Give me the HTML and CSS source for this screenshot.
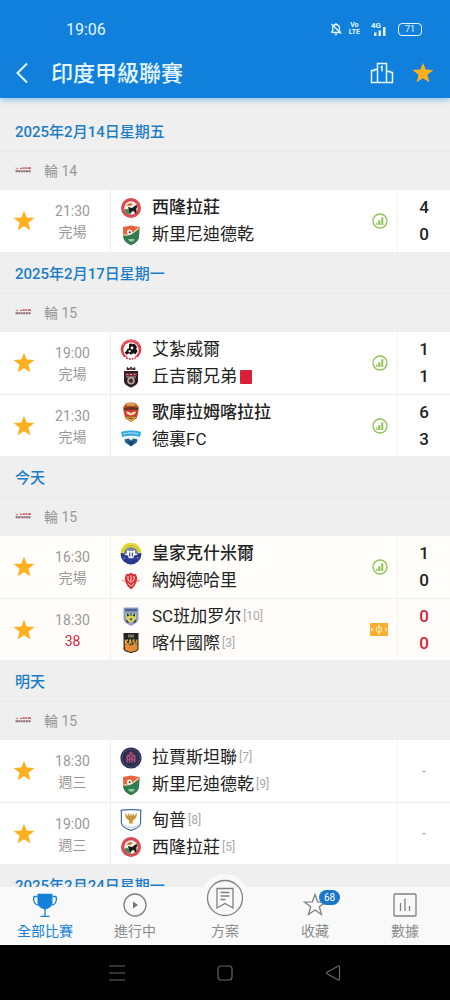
FILE: index.html
```html
<!DOCTYPE html>
<html lang="zh-Hant">
  <head>
    <meta charset="UTF-8" />
    <meta name="viewport" content="width=device-width, initial-scale=1" />
    <title>印度甲級聯賽</title>
    <link rel="stylesheet" href="styles.css" />
  </head>
  <body>
    <!-- shared icons and club badges -->
    <svg class="sprite" aria-hidden="true">
      <symbol id="star" viewBox="0 0 24 24">
        <path fill="#ffb01f" d="M12 .8l2.900 7.500 8.500.4-6.600 5.200 2.200 8.300-7-4.600-7 4.600 2.200-8.300L.6 8.700l8.500-.4z" />
      </symbol>
      <symbol id="stats" viewBox="0 0 16 16">
        <circle cx="8" cy="8" r="7" fill="none" stroke="#8fc352" stroke-width="1.3" />
        <path fill="#8fc352" d="M4.200 9.500h1.300v2.500H4.200zM6.200 7.200h2.200V12H6.200zM9.300 4.200h2V12h-2z" />
      </symbol>
      <symbol id="league" viewBox="0 0 16 8">
        <path fill="#c9666b" d="M0 1.500l2 .5 1.500 1.300L2 3.300zM5 1.800h2v1.200H5zM7.600 1.300h2.200V3H7.600zM10.300 1.300h2V3h-2zM12.900 1.300H16V3h-3.100z" />
        <path fill="#8a6a6c" d="M.6 4.200h2.200v2H.6zM3.200 4.200h2.200v2H3.200zM5.900 4.200h1.800v2H5.900zM8.200 4.200h2.200v2H8.200zM10.900 4.200h2v2h-2zM13.400 4.200h2.200v2h-2.200z" />
      </symbol>
      <symbol id="shillong" viewBox="0 0 22 22">
        <circle cx="11" cy="11" r="10" fill="#d8424f" />
        <circle cx="11" cy="11" r="8.600" fill="none" stroke="#e36c72" stroke-dasharray="1 1" />
        <circle cx="11" cy="11" r="6.800" fill="#f6f3e8" />
        <path fill="#3d8a55" d="M4.500 12.500c3-1.600 5 .4 6.500 4.900C7.500 17.800 5 15.600 4.500 12.500z" />
        <path fill="#1d1d1d" d="M8 10l4 1 4.500-3.300.8 2.300-1 1.500.3 4-1.600 1-1-2.500-2 .4-1.500 2-1.500-2.400z" />
        <path fill="#d9622d" d="M6 8.500l4-2.500 3 1-3 2z" />
      </symbol>
      <symbol id="sreenidi" viewBox="0 0 22 22">
        <path fill="#e8633f" d="M3 3l8-1.500L19.500 3 19 13c-.8 4-4 6.500-7.800 8C7 19.500 4 17 3.300 13z" />
        <path fill="#2f7d50" d="M19.500 3L19 13c-.8 4-4 6.500-7.800 8C7 19.500 4 17 3.300 13l-.1-2c6 .5 10-1.500 16.300-8z" />
        <path fill="none" stroke="#f5d7b0" stroke-width="1.200" d="M3.500 11.200C10 11.300 13 9.500 18.800 4" />
        <circle cx="9.500" cy="8" r="2.600" fill="#f7f3ea" />
        <circle cx="9.700" cy="8.200" r="1" fill="#333" />
        <path fill="#9ccaa3" d="M8 15h6.500l-1 2.500h-4z" />
      </symbol>
      <symbol id="aizawl" viewBox="0 0 22 22">
        <circle cx="11" cy="10.500" r="10.300" fill="#e23a44" />
        <path fill="none" stroke="#f6b4b4" stroke-dasharray="1 1" d="M3 6a9.300 9.300 0 0 1 16 0" />
        <circle cx="11" cy="11" r="7.700" fill="#fff" />
        <path fill="#151515" d="M9 5.500l2-1.200 1.500 1 2-.5 2.500 3-.8 2 1.300 2.500-2 3-2.500-1-2 1.500-2-1.500-2.500 1.500-2-2.500 2-1 .5-2 2-1z" />
        <circle cx="12" cy="9" r="1.400" fill="#fff" />
        <path fill="#fff" d="M8 12l2-1 1 1.500-1.500 1zM4.500 18h13l-2 4h-9z" />
        <path fill="#e23a44" d="M6 18.500h2v1.500H6zM9 19h1.700v1.700H9zM11.700 19h1.700v1.700h-1.700zM14.300 18.500h1.800V20h-1.800z" />
      </symbol>
      <symbol id="churchill" viewBox="0 0 22 22">
        <path fill="#3a2226" d="M7 .8l2 1.700 2-1.900 2 1.900 2-1.700.5 3.200h-9z" />
        <path fill="#2c1d20" d="M4 5h14v10c0 3-3 5-7 6.500C7 20 4 18 4 15z" />
        <path fill="#7b2731" d="M5 7h12v3H5z" />
        <path fill="none" stroke="#c2adad" d="M6 11l10 0M6.500 8.500h2M10 8.500h2M13.500 8.500h2" />
        <circle cx="11" cy="14.800" r="3.800" fill="#b7a8a8" />
        <path fill="#52252c" d="M11 12.300l2.300 1.700-.8 2.800h-3L8.700 14z" />
        <path fill="#9f6b6e" d="M9 2.600h4v1.200H9z" />
      </symbol>
      <symbol id="gokulam" viewBox="0 0 22 22">
        <path fill="#b9502f" d="M6 2.500c3-1.500 7-1.500 10 0l3 4-1 6-1.500 5L11 21l-5.500-3.500L4 12.500l-1-6z" />
        <path fill="#e0a64a" d="M6 3c3-1.500 7-1.500 10 0l-1.500 2c-2-.8-5-.8-7 0z" />
        <path fill="#6a3226" d="M4 7c4-1.500 10-1.500 14 0v2H4z" />
        <path fill="#d8322f" d="M4.500 9.500h13l-1 5.500h-11z" />
        <path fill="#f3dfba" d="M6 10.500l3.500.5 1.500 1.500 1.500-1.500 3.500-.5-1 2.500-4 1.500-4-1.500z" />
        <path fill="#d9b03c" d="M6 16h10l-1.500 2.500L11 20.500l-3.500-2z" />
        <path fill="#6a3226" d="M8.500 16.800h5v1h-5z" />
      </symbol>
      <symbol id="delhi" viewBox="0 0 22 22">
        <path fill="#34a9df" d="M1 4c6-2 14-2 20 0l-1 5c-6-1.800-12-1.800-18 0z" />
        <path fill="none" stroke="#bfe7f7" stroke-width="1.400" stroke-dasharray="1.500 .7" d="M3.500 6c5-1.500 10-1.500 15 0" />
        <path fill="#e6f5fb" d="M4 9.500c5-1.500 9-1.500 14 0V14l-7 5-7-5z" />
        <path fill="#255f8c" d="M4.500 11.500l4-1 2.500 2 2.500-2 4 1-.8 3L11 18.500l-5.700-4z" />
        <path fill="#133d60" d="M8 13.500h6l-3 4z" />
      </symbol>
      <symbol id="kashmir" viewBox="0 0 22 22">
        <circle cx="11" cy="11" r="10.400" fill="#27358e" />
        <path fill="#e8da36" d="M.6 10A10.400 10.400 0 0 1 21.400 10l-3.600.5a6.900 6.900 0 0 0-13.600 0z" />
        <path fill="none" stroke="#8c8a35" stroke-dasharray="1 1.200" d="M3 8.200a8.500 8.500 0 0 1 16 0" />
        <circle cx="11" cy="10.800" r="6.500" fill="#6c8aa6" />
        <path fill="#27358e" d="M5 12h12c-.5 3.500-3 5.300-6 5.300S5.500 15.500 5 12z" />
        <path fill="#f7f7f3" d="M7 7l3 1.300 1-1 1 1L15 7v3.500l3 .8-4 1.500-.7 2.500H8.700L8 12.800l-4-1.500 3-.8z" />
        <path fill="#27358e" d="M9.200 9.500h1v4h-1zM11.800 9.500h1v4h-1z" />
        <path fill="#fff" d="M3.500 14.500l1.500.3-1 1.200zM17 14.800l1.500-.3-.5 1.500z" />
      </symbol>
      <symbol id="namdhari" viewBox="0 0 22 22">
        <path fill="#f2b0a0" d="M1 9.500l5 .7v2l-3-.7zM21 9.500l-5 .7v2l3-.7z" />
        <path fill="#d93338" d="M11 2.500l1.500 1.300 3.500.5 1.300 4-1 4L14.500 16 11 19.500 7.500 16l-1.800-3.700-1-4 1.300-4 3.500-.5z" />
        <path fill="none" stroke="#fbd9d4" d="M8 6v4l3 2.500 3-2.500V6M11 5.500V11M8 13.500l3 2.500 3-2.500" />
      </symbol>
      <symbol id="bengaluru" viewBox="0 0 22 22">
        <path fill="#8fa0c4" d="M3.500 2.500h15V14c0 3-4 5-7.500 7-3.500-2-7.500-4-7.500-7z" />
        <path fill="#4f5f8e" d="M5 3.800h12v2.400H5z" />
        <path fill="#d9cf62" d="M6 8.500l3 1 2-1 2 1 3-1v5l-3 4h-4l-3-4z" />
        <path fill="#28363b" d="M7 8l2.500 2.700-2.500.8zM15 8l-2.500 2.700 2.500.8zM9.500 13.500h3L11 15.700zM6.500 14.500l3 3.500-3.500-1zM15.500 14.500l-3 3.500 3.500-1z" />
        <path fill="#608e79" d="M10 8h2v3h-2z" />
      </symbol>
      <symbol id="kashi" viewBox="0 0 22 22">
        <path fill="#242321" d="M3.500 1h15v16c0 2-4 3-7.500 4.300C7.500 20 3.500 19 3.500 17z" />
        <path fill="#777268" d="M8 2.500h6v3H8z" />
        <path fill="#e58b32" d="M4.500 13l3-1 3.500 1.500 3.500-1.500 3 1v4c0 1.500-4 2.300-6.500 3.200-2.500-.9-6-1.700-6-3.200z" />
        <path fill="none" stroke="#efb33e" stroke-width="1.200" d="M5.300 7.500v5M8 7.500l-2.300 2.500L8 12.500M9 12.500l1.200-5 1.200 5M15 8h-2v2h2v2h-2M16.800 7.500v5" />
      </symbol>
      <symbol id="rajasthan" viewBox="0 0 22 22">
        <circle cx="11" cy="11" r="10.600" fill="#292b50" />
        <circle cx="11" cy="11" r="8.800" fill="none" stroke="#62658a" stroke-width="1.200" stroke-dasharray="1 1" />
        <circle cx="11" cy="11" r="6.800" fill="#353052" />
        <path fill="#a8506f" d="M6.500 9L8 7l1.500 1.500V6L11 4l1.500 2v2.500L14 7l1.500 2v6.500h-9z" />
        <path fill="#292b50" d="M8 10h1v2H8zM10.500 7.500h1V11h-1zM13 10h1v2h-1zM8 13.500h1v2H8zM10.500 12.500h1v3h-1zM13 13.500h1v2h-1z" />
      </symbol>
      <symbol id="dempo" viewBox="0 0 22 22">
        <path fill="#fff" stroke="#476da8" stroke-width="1.200" d="M1 1.500C2 .8 4 .6 11 .6s9 .2 10 .9c-.5 1.500-.4 3-.4 4.500v8c0 4-5 6-9.600 7.300C6.400 20 1.400 18 1.400 14V6c0-1.500.1-3-.4-4.500z" />
        <path fill="#c9983e" d="M5 4l3 3V4l2 3 1-3.500L12 7l2-3v3l3-3c0 4-1.500 6-3.500 7l-1 2 1 1.500h-5l1-1.500-1-2C6.500 10 5 8 5 4z" />
        <path fill="none" stroke="#7794c0" stroke-dasharray="1 .8" d="M3.500 15.500c4 3.700 11 3.700 15 0" />
      </symbol>
    </svg>

    <header class="header">
      <div class="status-bar">
        <span class="clock">19:06</span>
        <div class="status-icons">
          <svg class="icon-mute" viewBox="0 0 12 14" aria-hidden="true">
            <path d="M2.500 10.500h8L9.400 9V6A3.400 3.400 0 0 0 6 2.500 3.400 3.400 0 0 0 2.700 6v3L1 10.500M6 1v1.500M5 12.500h2M1.500 2l9.500 9.500" />
          </svg>
          <span class="volte"><span>Vo</span><span>LTE</span></span>
          <span class="signal">
            <span>4G</span>
            <svg viewBox="0 0 16 14" aria-hidden="true">
              <path fill="#e5f5ff" d="M3 10.500h2.500V14H3zM7.500 8.500H10V14H7.500zM12 5h2.500v9H12z" />
            </svg>
          </span>
          <span class="battery">71</span>
        </div>
      </div>
      <div class="title-bar">
        <button class="icon-button" type="button" aria-label="返回">
          <svg class="icon-back" viewBox="0 0 12 22"><path d="M11 1.500L1.500 11l9.500 9.500" /></svg>
        </button>
        <h1 class="title">印度甲級聯賽</h1>
        <button class="icon-button" type="button" aria-label="積分榜">
          <svg class="icon-podium" viewBox="0 0 24 22">
            <path d="M7.500 20.500V1.500h9v19M7.500 7.500H4.500v1h-3v12h21v-10h-2v-1h-4M10.500 5.500l1.500-1v5" />
          </svg>
        </button>
        <button class="icon-button" type="button" aria-label="收藏聯賽">
          <svg class="icon-star"><use href="#star" /></svg>
        </button>
      </div>
    </header>

    <main class="fixtures">
      <section class="day">
        <h2 class="date">2025年2月14日星期五</h2>
        <h3 class="round"><svg class="league"><use href="#league" /></svg>輪 14</h3>
        <article class="match">
          <button class="fav" type="button" aria-label="收藏"><svg class="icon-star"><use href="#star" /></svg></button>
          <div class="time"><span>21:30</span><span>完場</span></div>
          <div class="teams">
            <div class="team winner"><svg class="logo"><use href="#shillong" /></svg>西隆拉莊</div>
            <div class="team"><svg class="logo"><use href="#sreenidi" /></svg>斯里尼迪德乾</div>
          </div>
          <svg class="icon-stats"><use href="#stats" /></svg>
          <div class="score"><span>4</span><span>0</span></div>
        </article>
      </section>

      <section class="day">
        <h2 class="date">2025年2月17日星期一</h2>
        <h3 class="round"><svg class="league"><use href="#league" /></svg>輪 15</h3>
        <article class="match">
          <button class="fav" type="button" aria-label="收藏"><svg class="icon-star"><use href="#star" /></svg></button>
          <div class="time"><span>19:00</span><span>完場</span></div>
          <div class="teams">
            <div class="team"><svg class="logo"><use href="#aizawl" /></svg>艾紮威爾</div>
            <div class="team"><svg class="logo"><use href="#churchill" /></svg>丘吉爾兄弟<span class="red-card"></span></div>
          </div>
          <svg class="icon-stats"><use href="#stats" /></svg>
          <div class="score"><span>1</span><span>1</span></div>
        </article>
        <article class="match">
          <button class="fav" type="button" aria-label="收藏"><svg class="icon-star"><use href="#star" /></svg></button>
          <div class="time"><span>21:30</span><span>完場</span></div>
          <div class="teams">
            <div class="team winner"><svg class="logo"><use href="#gokulam" /></svg>歌庫拉姆喀拉拉</div>
            <div class="team"><svg class="logo"><use href="#delhi" /></svg>德裏FC</div>
          </div>
          <svg class="icon-stats"><use href="#stats" /></svg>
          <div class="score"><span>6</span><span>3</span></div>
        </article>
      </section>

      <section class="day today">
        <h2 class="date">今天</h2>
        <h3 class="round"><svg class="league"><use href="#league" /></svg>輪 15</h3>
        <article class="match">
          <button class="fav" type="button" aria-label="收藏"><svg class="icon-star"><use href="#star" /></svg></button>
          <div class="time"><span>16:30</span><span>完場</span></div>
          <div class="teams">
            <div class="team winner"><svg class="logo"><use href="#kashmir" /></svg>皇家克什米爾</div>
            <div class="team"><svg class="logo"><use href="#namdhari" /></svg>納姆德哈里</div>
          </div>
          <svg class="icon-stats"><use href="#stats" /></svg>
          <div class="score"><span>1</span><span>0</span></div>
        </article>
        <article class="match live">
          <button class="fav" type="button" aria-label="收藏"><svg class="icon-star"><use href="#star" /></svg></button>
          <div class="time"><span>18:30</span><span class="minute">38</span></div>
          <div class="teams">
            <div class="team"><svg class="logo"><use href="#bengaluru" /></svg>SC班加罗尔<span class="rank">[10]</span></div>
            <div class="team"><svg class="logo"><use href="#kashi" /></svg>喀什國際<span class="rank">[3]</span></div>
          </div>
          <svg class="icon-pitch" viewBox="0 0 18 13" aria-hidden="true">
            <rect width="18" height="13" rx="1" fill="#f6b02c" />
            <path fill="none" stroke="#fff0c8" d="M9 1.500v10M1 5.500h1.500v2H1M17 5.500h-1.500v2H17" />
            <circle cx="9" cy="6.500" r="2.800" fill="none" stroke="#fff0c8" />
          </svg>
          <div class="score"><span>0</span><span>0</span></div>
        </article>
      </section>

      <section class="day">
        <h2 class="date">明天</h2>
        <h3 class="round"><svg class="league"><use href="#league" /></svg>輪 15</h3>
        <article class="match">
          <button class="fav" type="button" aria-label="收藏"><svg class="icon-star"><use href="#star" /></svg></button>
          <div class="time"><span>18:30</span><span>週三</span></div>
          <div class="teams">
            <div class="team"><svg class="logo"><use href="#rajasthan" /></svg>拉賈斯坦聯<span class="rank">[7]</span></div>
            <div class="team"><svg class="logo"><use href="#sreenidi" /></svg>斯里尼迪德乾<span class="rank">[9]</span></div>
          </div>
          <div class="score pending">-</div>
        </article>
        <article class="match">
          <button class="fav" type="button" aria-label="收藏"><svg class="icon-star"><use href="#star" /></svg></button>
          <div class="time"><span>19:00</span><span>週三</span></div>
          <div class="teams">
            <div class="team"><svg class="logo"><use href="#dempo" /></svg>甸普<span class="rank">[8]</span></div>
            <div class="team"><svg class="logo"><use href="#shillong" /></svg>西隆拉莊<span class="rank">[5]</span></div>
          </div>
          <div class="score pending">-</div>
        </article>
      </section>

      <section class="day">
        <h2 class="date">2025年2月24日星期一</h2>
      </section>
    </main>

    <nav class="tabs">
      <a class="tab active" href="#all">
        <svg class="tab-icon" viewBox="0 0 24 24">
          <path fill="#1580d8" stroke="none" d="M4.500.8h15V9c0 4-3 6.500-7.500 7.500C7.500 15.500 4.500 13 4.500 9z" />
          <path d="M4.500 3.500H2C.5 3.500.5 5 .7 7c.4 3 2 4.800 5 5.200M19.500 3.500H22c1.500 0 1.500 1.500 1.300 3.500-.4 3-2 4.800-5 5.200M12 16v7M7.500 23.300h9" />
        </svg>
        <span>全部比賽</span>
      </a>
      <a class="tab" href="#live">
        <svg class="tab-icon" viewBox="0 0 24 24">
          <circle cx="12" cy="12" r="11" />
          <path fill="#777" stroke="none" d="M10 8.500l5 3.500-5 3.500z" />
        </svg>
        <span>進行中</span>
      </a>
      <a class="tab" href="#plans">
        <svg class="tab-icon raised" viewBox="0 0 48 48">
          <circle cx="24" cy="24" r="24" fill="#f9f9f9" stroke="none" />
          <circle cx="24" cy="24" r="17.500" />
          <path d="M16 14.500h16v19.500l-8-4.500-8 4.500zM19.500 18.500h9M19.500 22h9M19.500 25.500h5" />
        </svg>
        <span>方案</span>
      </a>
      <a class="tab" href="#favourites">
        <svg class="tab-icon" viewBox="0 0 24 24">
          <path d="M12 1.500l2.600 7.300 8 .2-6.300 4.700 2.200 7.800-6.500-4.500-6.500 4.500 2.200-7.800L1.400 9l8-.2z" />
        </svg>
        <span class="badge">68</span>
        <span>收藏</span>
      </a>
      <a class="tab" href="#data">
        <svg class="tab-icon" viewBox="0 0 24 24">
          <rect x="1" y="1" width="22" height="22" rx="1" />
          <path d="M7.500 10v8M12 5.500V18M16.500 13v5" />
        </svg>
        <span>數據</span>
      </a>
    </nav>

    <div class="system-nav">
      <button class="system-button" type="button" aria-label="選單">
        <svg viewBox="0 0 18 18"><path d="M1 2h16M1 9h16M1 16h16" /></svg>
      </button>
      <button class="system-button" type="button" aria-label="主畫面">
        <svg viewBox="0 0 18 18"><rect x="2" y="2" width="14" height="14" rx="3" /></svg>
      </button>
      <button class="system-button" type="button" aria-label="上一頁">
        <svg viewBox="0 0 18 18"><path d="M15.500 3v12c0 1-.8 1.300-1.600.8L3 9.800c-.7-.4-.7-1.200 0-1.600l10.900-6c.8-.5 1.600-.2 1.600.8z" /></svg>
      </button>
    </div>
  </body>
</html>
```

FILE: styles.css
```css
* {
  box-sizing: border-box;
}
body {
  margin: 0;
  height: 100vh;
  display: flex;
  flex-direction: column;
  background: #efefef;
  color: #222;
  font-family: Roboto, "Noto Sans CJK TC", sans-serif;
}
h1,
h2,
h3 {
  margin: 0;
}
button {
  padding: 0;
  border: none;
  background: none;
  cursor: pointer;
}
svg {
  display: block;
  flex: none;
}
.sprite {
  position: absolute;
  width: 0;
  height: 0;
}

/* header */
.header {
  flex: none;
  position: relative;
  background: #1080dc;
  color: #e5f5ff;
  box-shadow: 0 2px 6px #8dc0ea;
}
.status-bar {
  display: flex;
  align-items: center;
  justify-content: space-between;
  height: 48px;
  padding: 10px 28px 0 66px;
}
.clock {
  font-size: 16px;
}
.status-icons {
  display: flex;
  align-items: center;
  gap: 7px;
}
.icon-mute {
  width: 12px;
  height: 14px;
  fill: none;
  stroke: #e5f5ff;
  stroke-width: 1.3;
}
.volte {
  display: flex;
  flex-direction: column;
  align-items: center;
  font-size: 7px;
  font-weight: bold;
  line-height: 7px;
}
.signal {
  display: grid;
  margin: 0 4px;
  font-size: 8px;
  font-weight: bold;
  line-height: 8px;
}
.signal > * {
  grid-area: 1 / 1;
}
.signal svg {
  width: 16px;
  height: 14px;
}
.battery {
  width: 24px;
  border: 1px solid #e5f5ff;
  border-radius: 4px;
  box-shadow: 1px 0 0 -1px #e5f5ff;
  font-size: 9px;
  line-height: 11px;
  text-align: center;
}
.title-bar {
  display: flex;
  align-items: center;
  gap: 18px;
  height: 50px;
  padding: 0 16px;
}
.title {
  flex: 1;
  padding: 0 0 4px 5px;
  font-size: 22px;
  font-weight: 500;
}
.icon-back,
.icon-podium {
  fill: none;
  stroke: #e5f5ff;
  stroke-width: 2;
}
.icon-back {
  width: 12px;
  height: 22px;
}
.icon-podium {
  width: 24px;
  height: 22px;
  stroke-width: 1.5;
}
.icon-star {
  width: 22px;
  height: 22px;
}

/* fixtures */
.fixtures {
  flex: 1;
  min-height: 0;
  padding-top: 12px;
  overflow-y: auto;
  scrollbar-width: none;
}
.date {
  height: 42px;
  padding-left: 15px;
  border-bottom: 1px solid #e9e9e9;
  color: #1b7cc9;
  font-size: 15px;
  font-weight: 500;
  line-height: 45px;
}
.round {
  display: flex;
  align-items: center;
  gap: 13px;
  height: 38px;
  padding: 0 0 2px 15px;
  color: #999;
  font-size: 14px;
  font-weight: normal;
}
.league {
  width: 16px;
  height: 8px;
}
.match {
  display: flex;
  align-items: center;
  height: 62px;
  background: #fff;
}
.match + .match {
  border-top: 1px solid #efefef;
}
.today .match {
  background: #fffefb;
}
.today .live {
  background: #fffcfa;
}
.fav {
  display: flex;
  justify-content: center;
  width: 48px;
}
.time {
  display: flex;
  flex-direction: column;
  width: 62px;
  padding: 2px 13px 0 0;
  color: #999;
  font-size: 14px;
  line-height: 21px;
  text-align: center;
}
.minute {
  color: #d0263c;
}
.teams {
  flex: 1;
  align-self: stretch;
  display: flex;
  flex-direction: column;
  justify-content: center;
  padding-left: 9px;
  border-left: 1px solid #efefef;
}
.team {
  display: flex;
  align-items: center;
  font-size: 17px;
  line-height: 27px;
  white-space: nowrap;
}
.winner {
  font-weight: 500;
}
.logo {
  width: 22px;
  height: 22px;
  margin-right: 10px;
}
.rank {
  margin-left: 2px;
  color: #aaa;
  font-size: 12px;
}
.red-card {
  width: 12px;
  height: 14px;
  margin-left: 3px;
  border-radius: 1px;
  background: #d8203a;
}
.icon-stats {
  width: 16px;
  height: 16px;
  margin-right: 9px;
}
.icon-pitch {
  width: 18px;
  height: 13px;
  margin-right: 9px;
}
.score {
  align-self: stretch;
  display: flex;
  flex-direction: column;
  justify-content: center;
  width: 53px;
  border-left: 1px solid #f4f4f4;
  font-size: 17px;
  font-weight: 500;
  line-height: 27px;
  text-align: center;
}
.live .score {
  color: #d0263c;
}
.pending {
  color: #aaa;
  font-size: 14px;
  font-weight: normal;
}

/* bottom tabs */
.tabs {
  flex: none;
  position: relative;
  display: flex;
  height: 58px;
  background: #f9f9f9;
}
.tab {
  flex: 1;
  position: relative;
  display: flex;
  flex-direction: column;
  align-items: center;
  justify-content: flex-end;
  gap: 4px;
  padding-bottom: 4px;
  color: #8c8c8c;
  font-size: 14px;
  line-height: 20px;
  text-decoration: none;
}
.tab-icon {
  width: 24px;
  height: 24px;
  fill: none;
  stroke: #808080;
  stroke-width: 1.3;
}
.raised {
  width: 48px;
  height: 48px;
  margin-bottom: -5px;
}
.active {
  color: #1580d8;
}
.active .tab-icon {
  stroke: #1580d8;
}
.badge {
  position: absolute;
  top: 3px;
  left: 50%;
  margin-left: 4px;
  padding: 0 5px;
  border-radius: 8px;
  background: #1877c6;
  color: #fff;
  font-size: 10px;
  line-height: 15px;
}

/* system navigation */
.system-nav {
  flex: none;
  display: flex;
  justify-content: center;
  gap: 90px;
  height: 55px;
  background: #000;
}
.system-button svg {
  width: 18px;
  height: 18px;
  fill: none;
  stroke: #666;
  stroke-width: 1.2;
}
```
